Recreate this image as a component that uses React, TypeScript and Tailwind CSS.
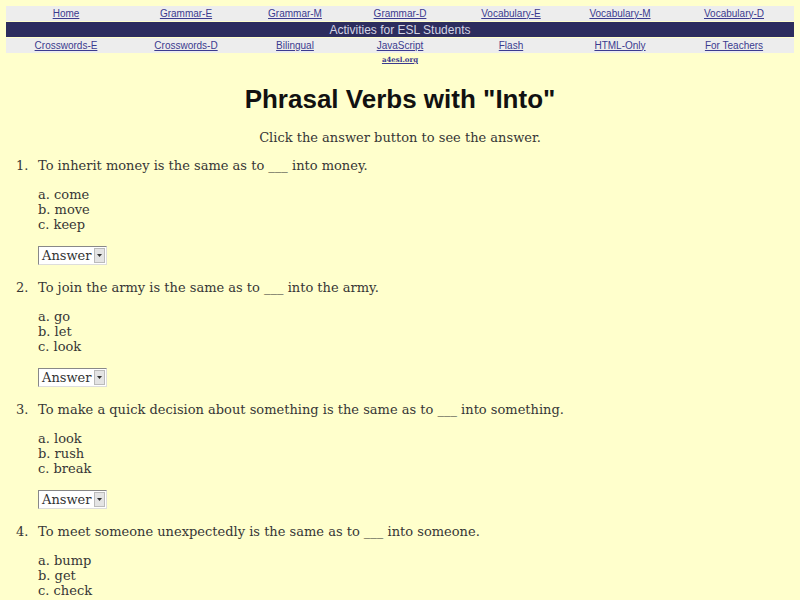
const topLinks: [string, string][] = [
  ["Home", "w-[120px]"],
  ["Grammar-E", "w-[120px]"],
  ["Grammar-M", "w-[98px]"],
  ["Grammar-D", "w-[112px]"],
  ["Vocabulary-E", "w-[110px]"],
  ["Vocabulary-M", "w-[108px]"],
  ["Vocabulary-D", "w-[120px]"],
];

const bottomLinks: [string, string][] = [
  ["Crosswords-E", "w-[120px]"],
  ["Crosswords-D", "w-[120px]"],
  ["Bilingual", "w-[98px]"],
  ["JavaScript", "w-[112px]"],
  ["Flash", "w-[110px]"],
  ["HTML-Only", "w-[108px]"],
  ["For Teachers", "w-[120px]"],
];

const questions = [
  { q: "To inherit money is the same as to ___ into money.", opts: ["come", "move", "keep"] },
  { q: "To join the army is the same as to ___ into the army.", opts: ["go", "let", "look"] },
  {
    q: "To make a quick decision about something is the same as to ___ into something.",
    opts: ["look", "rush", "break"],
  },
  { q: "To meet someone unexpectedly is the same as to ___ into someone.", opts: ["bump", "get", "check"] },
];

function NavRow({ links }: { links: [string, string][] }) {
  return (
    <div className="flex h-[15px] bg-[#ededed]">
      {links.map(([label, w]) => (
        <div key={label} className={`${w} flex items-center justify-center`}>
          <a href="#" className="text-[10px] leading-none text-[#3b3b8f] underline">
            {label}
          </a>
        </div>
      ))}
    </div>
  );
}

function AnswerBox() {
  return (
    <div className="inline-flex h-[19px] w-[69px] items-center border border-t-[#888] border-l-[#888] border-r-[#ddd] border-b-[#ddd] bg-white pl-[3px]">
      <span className="flex-1 text-[13px] leading-none text-[#333]">Answer</span>
      <span className="mr-[1px] flex h-[15px] w-[11px] items-center justify-center border border-[#bbb] bg-[#e4e4e4]">
        <svg width="5" height="3" viewBox="0 0 5 3">
          <path d="M0 0h5L2.5 3z" fill="#333" />
        </svg>
      </span>
    </div>
  );
}

export default function App() {
  return (
    <div className="min-h-[600px] bg-[#ffffcc] px-[6px] pt-[6px] font-['DejaVu_Serif',serif] text-[#363636]">
      <div className="flex flex-col gap-[1px] font-['Liberation_Sans',Arial,sans-serif]">
        <NavRow links={topLinks} />
        <div className="flex h-[15px] items-center justify-center bg-[#2d2d5e] text-[12px] leading-none text-[#d4d4e4]">
          Activities for ESL Students
        </div>
        <NavRow links={bottomLinks} />
      </div>
      <div className="text-center leading-[8px]">
        <a href="#" className="text-[7px] font-bold leading-[8px] text-[#3b3b8f] underline">
          a4esl.org
        </a>
      </div>

      <h1 className="mt-[20px] text-center font-['Liberation_Sans',Arial,sans-serif] text-[26px] font-bold leading-[30px] text-[#111]">
        Phrasal Verbs with "Into"
      </h1>
      <p className="mt-[16px] text-center text-[13px] leading-[15px]">Click the answer button to see the answer.</p>

      <ol className="mt-[13px] text-[13px] leading-[15px]">
        {questions.map((item, i) => (
          <li key={i} className="mb-[15px] flex">
            <span className="w-[28px] pl-[10px] text-left">{i + 1}.</span>
            <div className="pl-[4px]">
              <p>{item.q}</p>
              <div className="mt-[14px]">
                {item.opts.map((o, j) => (
                  <p key={o}>
                    {["a", "b", "c"][j]}. {o}
                  </p>
                ))}
              </div>
              <div className="mt-[14px] h-[19px]">
                <AnswerBox />
              </div>
            </div>
          </li>
        ))}
      </ol>
    </div>
  );
}
